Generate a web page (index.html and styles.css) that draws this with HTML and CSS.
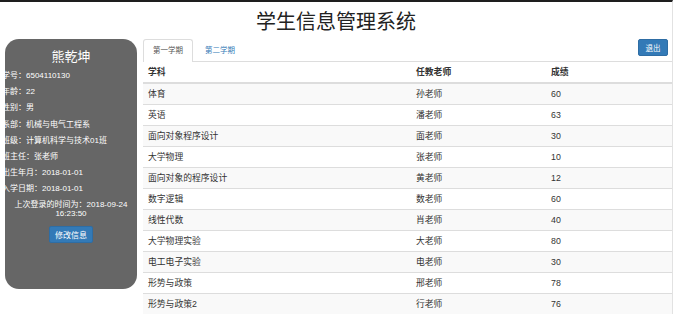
FILE: index.html
```html
<!DOCTYPE html>
<html lang="zh-CN">
<head>
  <meta charset="UTF-8" />
  <meta name="viewport" content="width=device-width, initial-scale=1.0" />
  <title>学生信息管理系统</title>
  <link rel="stylesheet" href="styles.css">
</head>
<body>
  <div class="page">
    <header>
      <h1>学生信息管理系统</h1>
    </header>
    <div class="content">
      <aside class="profile">
        <h2>熊乾坤</h2>
        <ul class="info">
          <li>学号：6504110130</li>
          <li>年龄：22</li>
          <li>性别：男</li>
          <li>系部：机械与电气工程系</li>
          <li>班级：计算机科学与技术01班</li>
          <li>班主任：张老师</li>
          <li>出生年月：2018-01-01</li>
          <li>入学日期：2018-01-01</li>
        </ul>
        <p class="last-login">上次登录的时间为：2018-09-24<br>16:23:50</p>
        <button class="btn">修改信息</button>
      </aside>
      <main class="grades">
        <div class="tabs">
          <a class="tab active">第一学期</a>
          <a class="tab">第二学期</a>
          <button class="btn logout">退出</button>
        </div>
        <table>
          <thead>
            <tr><th class="c1">学科</th><th class="c2">任教老师</th><th>成绩</th></tr>
          </thead>
          <tbody>
            <tr><td>体育</td><td>孙老师</td><td>60</td></tr>
            <tr><td>英语</td><td>潘老师</td><td>63</td></tr>
            <tr><td>面向对象程序设计</td><td>面老师</td><td>30</td></tr>
            <tr><td>大学物理</td><td>张老师</td><td>10</td></tr>
            <tr><td>面向对象的程序设计</td><td>黄老师</td><td>12</td></tr>
            <tr><td>数字逻辑</td><td>数老师</td><td>60</td></tr>
            <tr><td>线性代数</td><td>肖老师</td><td>40</td></tr>
            <tr><td>大学物理实验</td><td>大老师</td><td>80</td></tr>
            <tr><td>电工电子实验</td><td>电老师</td><td>30</td></tr>
            <tr><td>形势与政策</td><td>邢老师</td><td>78</td></tr>
            <tr><td>形势与政策2</td><td>行老师</td><td>76</td></tr>
          </tbody>
        </table>
      </main>
    </div>
  </div>
</body>
</html>
```

FILE: styles.css
```css
body {
  margin: 0;
  font-family: "Liberation Sans", "Noto Sans CJK SC", sans-serif;
  font-size: 8px;
  color: #333;
  background: #fff;
  overflow: hidden;
}
.page {
  width: 673px;
  height: 314px;
  border-top: 2px solid #1e1e1e;
  border-right: 1px solid #e2e2e2;
  box-sizing: border-box;
}
header {
  height: 37px;
  text-align: center;
}
header h1 {
  margin: 0;
  padding-top: 7px;
  font-size: 20px;
  font-weight: 400;
  line-height: 26px;
  color: #222;
}
.content {
  display: flex;
  gap: 6px;
  padding-left: 5px;
}
.profile {
  width: 132px;
  height: 250px;
  flex: none;
  background: #666;
  color: #fff;
  border-radius: 14px;
  text-align: center;
}
.profile h2 {
  margin: 0;
  padding-top: 10px;
  font-size: 13px;
  font-weight: 400;
  line-height: 16px;
}
.info {
  list-style: none;
  margin: 3px 0 0 -3px;
  padding: 0;
  text-align: left;
}
.info li {
  line-height: 16.2px;
  white-space: nowrap;
}
.last-login {
  margin: 2px 0 0;
  line-height: 9.5px;
}
.btn {
  border: 1px solid #2e6da4;
  background: #337ab7;
  color: #fff;
  font-family: inherit;
  font-size: 8px;
  border-radius: 2px;
  padding: 0;
  height: 17px;
  cursor: pointer;
}
.profile .btn {
  width: 44px;
  margin-top: 7px;
}
.grades {
  flex: 1;
}
.tabs {
  display: flex;
  align-items: flex-start;
  height: 22px;
  border-bottom: 1px solid #ddd;
  font-size: 7.5px;
}
.tab {
  display: block;
  height: 22px;
  line-height: 22px;
  padding: 0 9px;
  margin-right: 2px;
  color: #337ab7;
  border: 1px solid transparent;
  border-bottom: none;
  border-radius: 3px 3px 0 0;
  box-sizing: border-box;
  background: #fff;
}
.tab.active {
  color: #555;
  border-color: #ddd;
  height: 23px;
}
.logout {
  margin-left: auto;
  margin-right: 4px;
  width: 30px;
  font-size: 7.5px;
}
table {
  width: 100%;
  border-collapse: collapse;
  font-size: 8.8px;
}
th, td {
  text-align: left;
  padding: 0 5px;
  line-height: 20px;
  border-top: 1px solid #ddd;
  white-space: nowrap;
}
thead th {
  border-top: none;
  border-bottom: 2px solid #ddd;
  font-weight: 700;
  color: #333;
  line-height: 20px;
}
.c1 {
  width: 258px;
}
.c2 {
  width: 125px;
}
tbody tr:nth-child(odd) {
  background: #f9f9f9;
}
```
